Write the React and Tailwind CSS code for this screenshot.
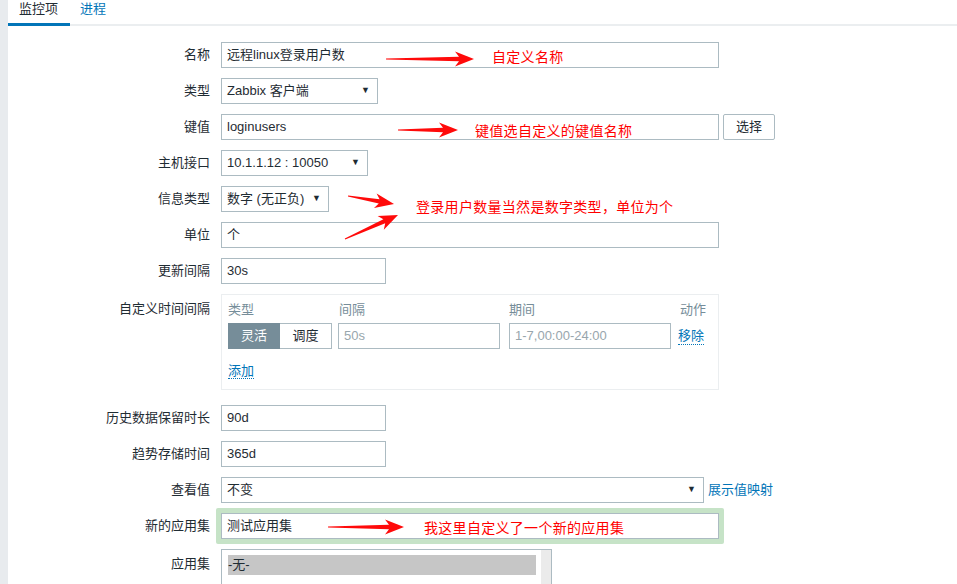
import React from 'react';

const FONT = "font-[family-name:'Liberation_Sans','Noto_Sans_CJK_SC',sans-serif]";

// red annotation arrows: [x1, y1, x2, y2]
const ARROWS = [
  [386, 59, 474, 59],
  [398, 130, 458, 130],
  [348, 196, 394, 204],
  [345, 239, 398, 215],
  [328, 527, 404, 527],
];

const NOTES = [
  { text: '自定义名称', left: 'left-[492px]', top: 'top-[49px]' },
  { text: '键值选自定义的键值名称', left: 'left-[475px]', top: 'top-[123px]' },
  { text: '登录用户数量当然是数字类型，单位为个', left: 'left-[416px]', top: 'top-[199px]' },
  { text: '我这里自定义了一个新的应用集', left: 'left-[424px]', top: 'top-[520px]' },
];

function arrowPoints([x1, y1, x2, y2]) {
  const dx = x2 - x1, dy = y2 - y1;
  const L = Math.hypot(dx, dy);
  const ux = dx / L, uy = dy / L, nx = -uy, ny = ux;
  const local = [[0, -0.6], [L - 15, -2.2], [L - 19, -7.5], [L, 0], [L - 19, 7.5], [L - 15, 2.2], [0, 0.6]];
  return local.map(([a, b]) => `${(x1 + ux * a + nx * b).toFixed(1)},${(y1 + uy * a + ny * b).toFixed(1)}`).join(' ');
}

function Input({ value, className = '' }) {
  return (
    <div className={`h-[26px] border border-[#acbbc2] bg-white px-[5px] flex items-center text-[#1f2c33] ${className}`}>
      {value}
    </div>
  );
}

function Select({ value, className = '' }) {
  return (
    <div className={`h-[26px] border border-[#acbbc2] bg-white pl-[5px] pr-[7px] flex items-center justify-between text-[#1f2c33] ${className}`}>
      <span>{value}</span>
      <span className="text-[9px] text-[#1f2c33]">▼</span>
    </div>
  );
}

function Row({ label, children, top = false }) {
  return (
    <div className={`flex ${top ? 'items-start' : 'items-center'}`}>
      <div className={`w-[202px] shrink-0 text-right text-[#1f2c33] ${top ? 'pt-[5px]' : ''}`}>{label}</div>
      <div className="ml-[11px] flex items-center">{children}</div>
    </div>
  );
}

export default function App() {
  return (
    <div className={`relative w-[957px] h-[584px] overflow-hidden bg-white text-[13px] ${FONT}`}>
      <div className="flex h-full">
        <div className="w-[8px] shrink-0 bg-[#e8ebee]" />

        <div className="flex-1">
          {/* Tabs */}
          <div className="flex h-[26px] border-b-2 border-[#ebeef0]">
            <div className="w-[62px] pl-[11px] border-b-[3px] border-[#0275b8] -mb-[2px] text-[#1f2c33] leading-[18px]">监控项</div>
            <div className="pl-[10px] text-[#0275b8] leading-[18px]">进程</div>
          </div>

          {/* Form */}
          <div className="pt-[16px] flex flex-col gap-[10px]">
            <Row label="名称"><Input value="远程linux登录用户数" className="w-[498px]" /></Row>
            <Row label="类型"><Select value="Zabbix 客户端" className="w-[157px]" /></Row>
            <Row label="键值">
              <Input value="loginusers" className="w-[498px]" />
              <div className="ml-[4px] h-[26px] w-[52px] border border-[#acbbc2] rounded-[2px] bg-white flex items-center justify-center text-[#1f2c33]">选择</div>
            </Row>
            <Row label="主机接口"><Select value="10.1.1.12 : 10050" className="w-[147px]" /></Row>
            <Row label="信息类型"><Select value="数字 (无正负)" className="w-[108px]" /></Row>
            <Row label="单位"><Input value="个" className="w-[498px]" /></Row>
            <Row label="更新间隔"><Input value="30s" className="w-[165px]" /></Row>

            <Row label="自定义时间间隔" top>
              <div className="w-[498px] h-[96px] border border-[#ebeef0] pl-[6px] pt-[5px]">
                <div className="flex h-[20px] items-center text-[#768d99]">
                  <div className="w-[111px]">类型</div>
                  <div className="w-[170px]">间隔</div>
                  <div className="w-[171px]">期间</div>
                  <div>动作</div>
                </div>
                <div className="flex items-center mt-[3px]">
                  <div className="flex w-[104px]">
                    <div className="h-[26px] w-[52px] bg-[#768d99] text-white flex items-center justify-center">灵活</div>
                    <div className="h-[26px] w-[52px] border border-[#acbbc2] border-l-0 bg-white flex items-center justify-center text-[#1f2c33]">调度</div>
                  </div>
                  <Input value={<span className="text-[#98a6ad]">50s</span>} className="w-[162px] ml-[6px]" />
                  <Input value={<span className="text-[#98a6ad]">1-7,00:00-24:00</span>} className="w-[162px] ml-[9px]" />
                  <span className="ml-[7px] text-[#0275b8] border-b border-dotted border-[#0275b8] leading-[16px]">移除</span>
                </div>
                <div className="mt-[12px]">
                  <span className="text-[#0275b8] border-b border-dotted border-[#0275b8] leading-[16px]">添加</span>
                </div>
              </div>
            </Row>

            <div className="mt-[5px] flex flex-col gap-[10px]">
              <Row label="历史数据保留时长"><Input value="90d" className="w-[165px]" /></Row>
              <Row label="趋势存储时间"><Input value="365d" className="w-[165px]" /></Row>
              <Row label="查看值">
                <Select value="不变" className="w-[483px]" />
                <span className="ml-[4px] text-[#0275b8]">展示值映射</span>
              </Row>
              <Row label="新的应用集">
                <div className="-ml-[5px] -my-[5px] p-[5px] bg-[#c6e3c7] rounded-[2px]">
                  <Input value="测试应用集" className="w-[498px]" />
                </div>
              </Row>
              <Row label="应用集" top>
                <div className="w-[331px] h-[60px] border border-[#acbbc2] bg-white flex">
                  <div className="flex-1 pl-[6px] pt-[5px]">
                    <div className="h-[20px] bg-[#c6c6c6] flex items-center text-[#1f2c33]">-无-</div>
                  </div>
                  <div className="w-[10px] ml-[5px] bg-[#ebebeb]" />
                </div>
              </Row>
            </div>
          </div>
        </div>
      </div>

      {/* annotations */}
      <svg className="absolute inset-0 pointer-events-none" width="957" height="584">
        {ARROWS.map((a, i) => (
          <polygon key={i} points={arrowPoints(a)} fill="#ff0a0a" />
        ))}
      </svg>
      {NOTES.map((n) => (
        <div key={n.text} className={`absolute ${n.left} ${n.top} text-[14px] tracking-[0.3px] leading-[16px] text-[#ff0000]`}>{n.text}</div>
      ))}
    </div>
  );
}
